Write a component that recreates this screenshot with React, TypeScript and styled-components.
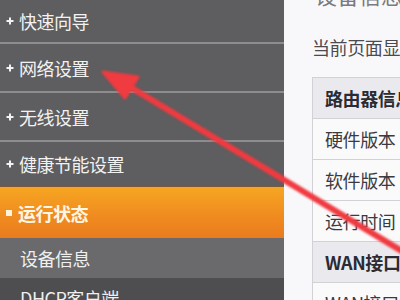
import React from 'react';
import styled, { createGlobalStyle } from 'styled-components';

const GlobalStyle = createGlobalStyle`
  html, body {
    margin: 0;
    padding: 0;
    background: #f8f8fa;
  }
  body {
    font-family: "Noto Sans CJK SC", "Noto Sans", sans-serif;
  }
`;

const menu = ['快速向导', '网络设置', '无线设置', '健康节能设置'];

const rows = [
  { label: '路由器信息', head: true },
  { label: '硬件版本' },
  { label: '软件版本' },
  { label: '运行时间' },
  { label: 'WAN接口状态', head: true },
  { label: 'WAN接口类型' },
];

export default function App() {
  return (
    <>
      <GlobalStyle />
      <Page>
        <Sidebar>
          {menu.map((name, i) => (
            <MenuItem key={name} first={i === 0}>
              <Plus />
              {name}
            </MenuItem>
          ))}
          <ActiveItem>
            <Square />
            运行状态
          </ActiveItem>
          <SubItem>设备信息</SubItem>
          <SubItem dark>DHCP客户端</SubItem>
        </Sidebar>

        <Content>
          <Title>设备信息</Title>
          <Hint>当前页面显示路由器的基本信息</Hint>
          <Table>
            {rows.map((r) => (
              <Row key={r.label} head={r.head}>
                <Cell>{r.label}</Cell>
              </Row>
            ))}
          </Table>
        </Content>

        <Arrow viewBox="0 0 400 300" width="400" height="300">
          <defs>
            <filter id="soft" x="-10%" y="-10%" width="120%" height="120%">
              <feGaussianBlur stdDeviation="1.3" />
            </filter>
          </defs>
          <g filter="url(#soft)" fill="#f03a40" stroke="#f03a40">
            <line x1="122" y1="82" x2="410" y2="256" strokeWidth="6" strokeLinecap="round" />
            <polygon points="103,72 138,77 125,98" strokeWidth="3" strokeLinejoin="round" />
          </g>
        </Arrow>
      </Page>
    </>
  );
}

const Page = styled.div`
  position: relative;
  display: flex;
  width: 400px;
  height: 300px;
  overflow: hidden;
  background: #f8f8fa;
`;

const Sidebar = styled.div`
  flex: 0 0 284px;
  display: flex;
  flex-direction: column;
  background: #5e5d5f;
`;

const MenuItem = styled.div<{ first?: boolean }>`
  display: flex;
  align-items: center;
  gap: 5px;
  flex: 0 0 ${({ first }) => (first ? '42px' : '47px')};
  padding-left: 6px;
  border-bottom: 2px solid #8d8c8e;
  color: #f2f2f2;
  font-size: 18px;
  letter-spacing: -0.5px;

  &:nth-child(4) {
    flex-basis: 44px;
    border-bottom: none;
  }
`;

const Plus = () => (
  <svg width="8" height="8" viewBox="0 0 8 8">
    <path d="M3 0.5 H5 V3 H7.5 V5 H5 V7.5 H3 V5 H0.5 V3 H3 Z" fill="#f4f4f4" />
  </svg>
);

const ActiveItem = styled.div`
  display: flex;
  align-items: center;
  gap: 6px;
  flex: 0 0 52px;
  padding-left: 6px;
  box-sizing: border-box;
  border-top: 1px solid #7a5a3a;
  background: linear-gradient(#f6a623, #ef8a1f 60%, #ea7b1e);
  color: #fff6e6;
  font-size: 18px;
  font-weight: bold;
  letter-spacing: -0.5px;
`;

const Square = styled.span`
  width: 6px;
  height: 6px;
  background: #fff3dc;
`;

const SubItem = styled.div<{ dark?: boolean }>`
  display: flex;
  align-items: center;
  flex: 0 0 40px;
  padding-left: 20px;
  background: ${({ dark }) => (dark ? '#4e4d50' : '#6a696c')};
  color: #f0f0f0;
  font-size: 18px;
  letter-spacing: -0.5px;
`;

const Content = styled.div`
  flex: 1;
  display: flex;
  flex-direction: column;
  padding-left: 28px;
  min-width: 0;
`;

const Title = styled.div`
  margin: -21px 0 0 3px;
  height: 30px;
  font-size: 22px;
  line-height: 30px;
  color: #7a7a80;
  white-space: nowrap;
`;

const Hint = styled.div`
  margin-top: 25px;
  height: 26px;
  font-size: 18px;
  line-height: 26px;
  color: #4a4a50;
  white-space: nowrap;
  letter-spacing: -0.4px;
`;

const Table = styled.div`
  margin-top: 17px;
  display: flex;
  flex-direction: column;
  border-left: 1px solid #d2d2d6;
  border-top: 1px solid #d2d2d6;
`;

const Row = styled.div<{ head?: boolean }>`
  display: flex;
  align-items: center;
  height: 40px;
  border-bottom: 1px solid #d2d2d6;
  background: ${({ head }) => (head ? '#eaeaee' : '#fafafb')};
  color: ${({ head }) => (head ? '#2b2b33' : '#3a3a40')};
  font-weight: ${({ head }) => (head ? 'bold' : 'normal')};
`;

const Cell = styled.div`
  padding-left: 12px;
  font-size: 18px;
  white-space: nowrap;
  letter-spacing: -0.4px;
`;

const Arrow = styled.svg`
  position: absolute;
  left: 0;
  top: 0;
  pointer-events: none;
`;
